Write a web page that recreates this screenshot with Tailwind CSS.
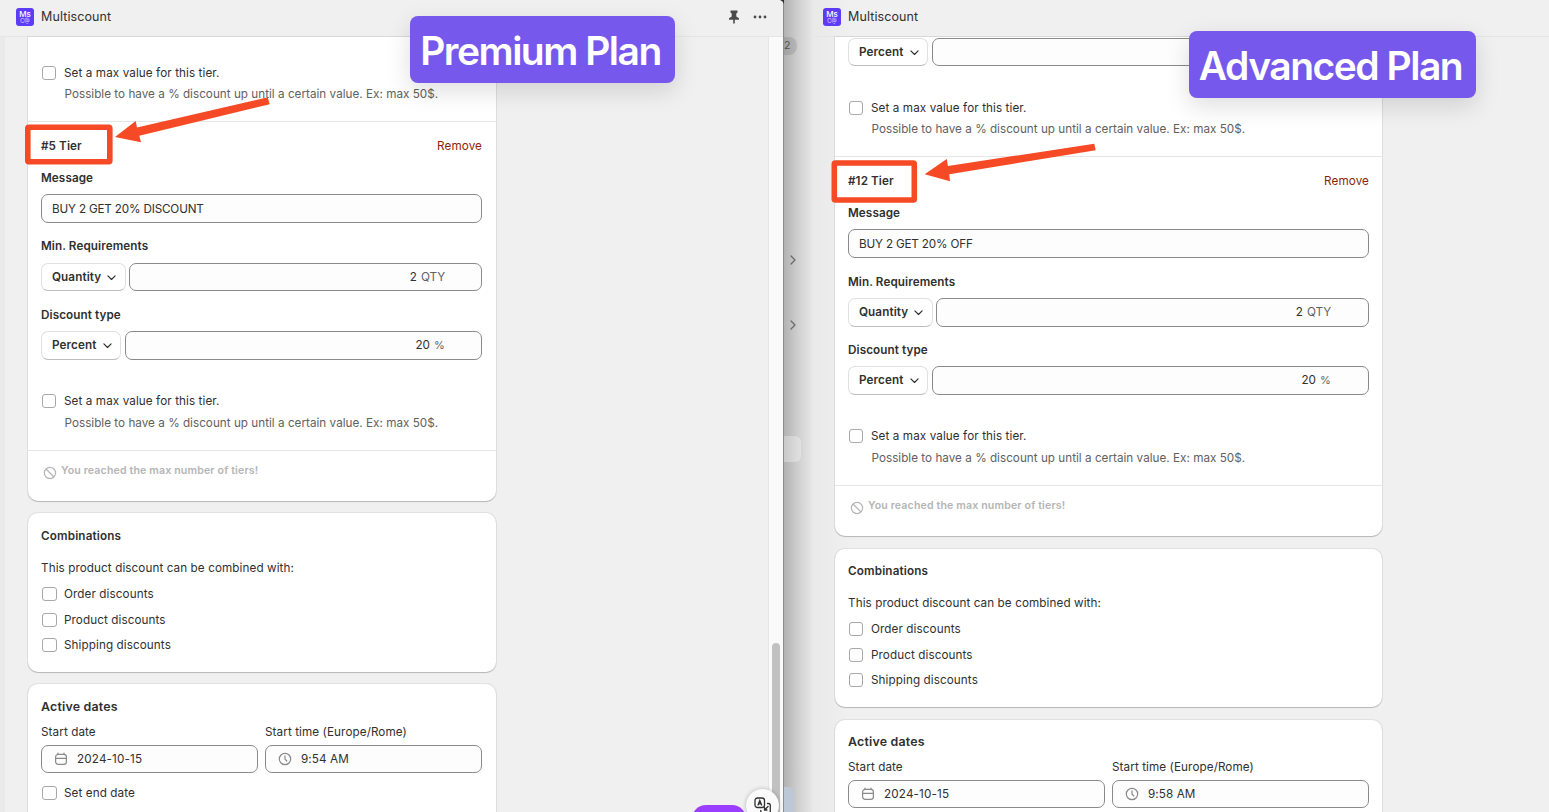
<!DOCTYPE html>
<html lang="en">

<head>
    <meta charset="UTF-8">
    <meta name="viewport" content="width=device-width, initial-scale=1.0">
    <title>Multiscount</title>
    <script src="https://cdn.jsdelivr.net/npm/@tailwindcss/browser@4"></script>
</head>

<body class="relative w-[1549px] h-[812px] overflow-hidden bg-[#f0f0f0] font-['Inter',sans-serif] text-[11.7px] leading-4 tracking-[0.09px] text-[#303030]">
    <!-- icons -->
    <svg class="hidden">
        <symbol id="chevron" viewBox="0 0 10 6" fill="none" stroke="currentColor" stroke-width="1.3" stroke-linecap="round" stroke-linejoin="round"><path d="M1 1l4 4 4-4" /></symbol>
        <symbol id="ban" viewBox="0 0 14 14" fill="none" stroke="currentColor" stroke-width="1.2"><circle cx="7" cy="7" r="5.6" /><path d="M3 3l8 8" /></symbol>
        <symbol id="calendar" viewBox="0 0 14 14" fill="none" stroke="currentColor" stroke-width="1.2" stroke-linecap="round"><rect x="1.6" y="2.3" width="10.8" height="10" rx="2.6" /><path d="M1.8 6.3h10.4M4 1v1.3M10 1v1.3" /></symbol>
        <symbol id="clock" viewBox="0 0 14 14" fill="none" stroke="currentColor" stroke-width="1.2" stroke-linecap="round" stroke-linejoin="round"><circle cx="7" cy="7" r="5.7" /><path d="M7 3.8v3.4l1.8 1.8" /></symbol>
    </svg>

    <div class="flex h-full">
        <!-- Premium window -->
        <section class="relative z-10 flex w-[784px] shrink-0 flex-col overflow-hidden border-r border-[#8c8c8c] bg-[#f0f0f0]">
            <header class="flex h-[37px] shrink-0 items-center border-b border-[#e6e6e6] pb-[3px] pl-4 pr-4">
                <div class="flex size-[18px] flex-col items-center rounded-[3px] bg-[#5c3bfb] pt-[2px] text-white">
                    <span class="text-[8px] font-medium leading-[8px] tracking-normal">Ms</span>
                    <span class="text-[5.5px] leading-[6px] tracking-normal text-white/80">C@</span>
                </div>
                <span class="ml-[7px] pt-px text-[12.5px] tracking-[0.1px]">Multiscount</span>
                <svg class="ml-auto h-[14px] w-[12px]" viewBox="0 0 12 14" fill="#4a4a4a"><path d="M2.5.5h7v2L8.3 3.6v2.8L11 8.3v1.5H6.8V13L6 14l-.8-1V9.8H1V8.3l2.700-1.900V3.6L2.5 2.5z" /></svg>
                <svg class="ml-[13px] h-[4px] w-[14px]" viewBox="0 0 14 4" fill="#4a4a4a"><circle cx="2" cy="2" r="1.4" /><circle cx="7" cy="2" r="1.4" /><circle cx="12" cy="2" r="1.4" /></svg>
            </header>
            <div class="flex min-h-0 flex-1">
                <div class="w-[5px] shrink-0 bg-[#eaeaea]"></div>
                <main class="ml-[23px] w-[468px] shrink-0">
                    <div class="h-[464px] rounded-b-[10px] bg-white shadow-[0_1px_1px_#00000030,0_0_0_1px_#0000000f]">
                        <div class="h-[84px] px-[13px] pt-[28px]">
                            <label class="flex items-center gap-2 pl-[1px]"><span class="size-[14px] rounded-[3px] border border-[#a8a8a8] bg-white"></span>Set a max value for this tier.</label>
                            <p class="mt-[5px] pl-[23.500px] tracking-[0.02px] text-[#616161]">Possible to have a % discount up until a certain value. Ex: max 50$.</p>
                        </div>
                        <div class="h-[329px] border-t border-[#e6e6e6] pl-[13px] pr-[14px]">
                            <div class="flex h-[48px] items-center justify-between"><h2 class="font-semibold">#5 Tier</h2><a class="text-[#8e1f0b]">Remove</a></div>
                            <h3 class="font-semibold">Message</h3>
                            <div class="mt-2 flex h-[29px] items-center rounded-[7px] border border-[#8a8a8a] bg-[#fdfdfd] px-[10px] tracking-[-0.17px]">BUY 2 GET 20% DISCOUNT</div>
                            <h3 class="mt-[15px] font-semibold">Min. Requirements</h3>
                            <div class="mt-[9px] flex h-[28px] gap-[3px]">
                                <button class="flex w-[85px] items-center justify-between rounded-[7px] border border-[#e0e0e0] border-b-[#bdbdbd] pl-[10px] pr-[9px] font-semibold">Quantity<svg class="mt-px h-[5.400px] w-[9px]"><use href="#chevron" /></svg></button>
                                <div class="flex flex-1 items-center justify-end gap-1 rounded-[7px] border border-[#8a8a8a] bg-[#fdfdfd] pr-[36px]">2 <span class="tracking-[-0.1px] text-[#616161]">QTY</span></div>
                            </div>
                            <h3 class="mt-4 font-semibold">Discount type</h3>
                            <div class="mt-2 flex h-[29px] gap-1">
                                <button class="flex w-[80px] items-center justify-between rounded-[7px] border border-[#e0e0e0] border-b-[#bdbdbd] pb-px pl-[10px] pr-[8px] font-semibold">Percent<svg class="mt-px h-[5.400px] w-[9px]"><use href="#chevron" /></svg></button>
                                <div class="flex flex-1 items-center justify-end gap-1 rounded-[7px] border border-[#8a8a8a] bg-[#fdfdfd] pb-px pr-[36px]">20 <span class="text-[11px] text-[#616161]">%</span></div>
                            </div>
                            <label class="mt-[33px] flex items-center gap-2 pl-px"><span class="size-[14px] rounded-[3px] border border-[#a8a8a8] bg-white"></span>Set a max value for this tier.</label>
                            <p class="mt-[6px] pl-[23.500px] tracking-[0.02px] text-[#616161]">Possible to have a % discount up until a certain value. Ex: max 50$.</p>
                        </div>
                        <div class="flex gap-1 border-t border-[#e6e6e6] pl-[15px] pt-[12px] text-[10.6px] font-semibold tracking-[0.15px] text-[#b5b5b5]"><svg class="mt-[3px] size-[14px]"><use href="#ban" /></svg>You reached the max number of tiers!</div>
                    </div>
                    <div class="mt-3 h-[159px] rounded-[10px] bg-white px-[13px] pt-[15px] shadow-[0_1px_1px_#00000030,0_0_0_1px_#0000000f]">
                        <h2 class="font-semibold tracking-[0.15px]">Combinations</h2>
                        <p class="mt-4">This product discount can be combined with:</p>
                        <div class="mt-[10px] flex flex-col gap-[9.500px] pl-[1px]">
                            <label class="flex items-center gap-[7px]"><span class="h-[14px] w-[15px] rounded-[3px] border border-[#a8a8a8]"></span>Order discounts</label>
                            <label class="flex items-center gap-[7px]"><span class="h-[14px] w-[15px] rounded-[3px] border border-[#a8a8a8]"></span>Product discounts</label>
                            <label class="flex items-center gap-[7px]"><span class="h-[14px] w-[15px] rounded-[3px] border border-[#a8a8a8]"></span>Shipping discounts</label>
                        </div>
                    </div>
                    <div class="mt-3 h-[159px] rounded-[10px] bg-white pl-[13px] pr-[14px] pt-[15px] shadow-[0_1px_1px_#00000030,0_0_0_1px_#0000000f]">
                        <h2 class="text-[12.4px] font-semibold tracking-[0.2px]">Active dates</h2>
                        <div class="mt-[9px] grid grid-cols-2 gap-[7px]">
                            <div>
                                <p>Start date</p>
                                <div class="mt-[5px] flex h-[28px] items-center gap-[9px] rounded-[7px] border border-[#8a8a8a] bg-[#fdfdfd] pl-3 tracking-[0.150px]"><svg class="size-[14px] text-[#8a8a8a]"><use href="#calendar" /></svg>2024-10-15</div>
                            </div>
                            <div>
                                <p>Start time (Europe/Rome)</p>
                                <div class="mt-[5px] flex h-[28px] items-center gap-[9px] rounded-[7px] border border-[#8a8a8a] bg-[#fdfdfd] pl-3"><svg class="size-[14px] text-[#8a8a8a]"><use href="#clock" /></svg>9:54 AM</div>
                            </div>
                        </div>
                        <label class="mt-3 flex items-center gap-[7px] pl-[1px]"><span class="h-[14px] w-[15px] rounded-[3px] border border-[#a8a8a8]"></span>Set end date</label>
                    </div>
                </main>
                <!-- scrollbar -->
                <div class="ml-auto w-[15px] border-l border-[#e6e6e6] bg-[#fafafa] pl-[3px] pt-[606px]">
                    <div class="h-[200px] w-2 rounded-full bg-[#c1c1c1]"></div>
                </div>
            </div>
            <div class="absolute left-[692px] top-[805px] h-[30px] w-[54px] rounded-[14px] bg-[#9b3dff]"></div>
            <div class="absolute left-[746px] top-[789px] flex size-[33px] justify-center rounded-full bg-[#fafafa] pt-2 shadow-[0_0_4px_#00000040]">
                <svg class="size-[17px]" viewBox="0 0 17 17" fill="none" stroke="#303030" stroke-width="1.3" stroke-linecap="round"><rect x="1" y="1" width="9.5" height="9.5" rx="2.5" /><path d="M4 8l1.8-4.500L7.600 8M4.600 6.800h2.300M13.500 6.500h.8a2 2 0 0 1 2 2v5.500a2 2 0 0 1-2 2H8.800a2 2 0 0 1-2-2v-.5M14 9.500l-3.500 3.500M10.500 10.500V13H13" /></svg>
            </div>
        </section>

        <!-- backdrop between the windows -->
        <div class="relative w-[28px] shrink-0 bg-linear-to-r from-[#b2b2b2] via-[#cfcfcf] to-[#e6e6e6] text-[#6b6b6b]">
            <span class="absolute left-0 top-[37px] w-[13px] rounded-r-lg bg-black/10 py-[1px] text-[10.500px] text-[#505050]">2</span>
            <svg class="absolute left-[4px] top-[255px] h-[10px] w-[10px] -rotate-90" viewBox="0 0 10 10"><use href="#chevron" y="2" width="10" height="6" /></svg>
            <svg class="absolute left-[4px] top-[320px] h-[10px] w-[10px] -rotate-90" viewBox="0 0 10 10"><use href="#chevron" y="2" width="10" height="6" /></svg>
            <span class="absolute left-0 top-[436px] h-[26px] w-[17px] rounded-r-md bg-white/30"></span>
            <span class="absolute left-0 top-[787px] h-[25px] w-[10px] rounded-tr-md bg-[#bdc8d6]"></span>
        </div>

        <!-- Advanced window -->
        <section class="flex flex-1 flex-col overflow-hidden bg-linear-to-r from-[#e9e9e9] to-[#f0f0f0] to-[40px]">
            <header class="flex h-[37px] shrink-0 items-center border-b border-[#e6e6e6] pb-[3px] pl-[11px]">
                <div class="flex size-[18px] flex-col items-center rounded-[3px] bg-[#5c3bfb] pt-[2px] text-white">
                    <span class="text-[8px] font-medium leading-[8px] tracking-normal">Ms</span>
                    <span class="text-[5.5px] leading-[6px] tracking-normal text-white/80">C@</span>
                </div>
                <span class="ml-[7px] pt-px text-[12.5px] tracking-[0.1px]">Multiscount</span>
            </header>
            <main class="ml-[23px] w-[547px]">
                <div class="h-[499px] rounded-b-[10px] bg-white shadow-[0_1px_1px_#00000030,0_0_0_1px_#0000000f]">
                    <div class="h-[119px] px-[13px] pt-px">
                        <div class="flex h-[28px] gap-1">
                            <button class="flex w-[80px] items-center justify-between rounded-[7px] border border-[#e0e0e0] border-b-[#bdbdbd] pl-[10px] pr-[8px] font-semibold">Percent<svg class="mt-px h-[5.400px] w-[9px]"><use href="#chevron" /></svg></button>
                            <div class="flex-1 rounded-[7px] border border-[#8a8a8a] bg-[#fdfdfd]"></div>
                        </div>
                        <label class="mt-[34px] flex items-center gap-2 pl-[1px]"><span class="size-[14px] rounded-[3px] border border-[#a8a8a8] bg-white"></span>Set a max value for this tier.</label>
                        <p class="mt-[5px] pl-[23.500px] tracking-[0.02px] text-[#616161]">Possible to have a % discount up until a certain value. Ex: max 50$.</p>
                    </div>
                    <div class="h-[329px] border-t border-[#e6e6e6] px-[13px]">
                        <div class="flex h-[48px] items-center justify-between"><h2 class="font-semibold">#12 Tier</h2><a class="text-[#8e1f0b]">Remove</a></div>
                        <h3 class="font-semibold">Message</h3>
                        <div class="mt-2 flex h-[29px] items-center rounded-[7px] border border-[#8a8a8a] bg-[#fdfdfd] px-[10px] tracking-[-0.17px]">BUY 2 GET 20% OFF</div>
                        <h3 class="mt-4 font-semibold">Min. Requirements</h3>
                        <div class="mt-2 flex h-[29px] gap-[3px]">
                            <button class="flex w-[85px] items-center justify-between rounded-[7px] border border-[#e0e0e0] border-b-[#bdbdbd] pb-px pl-[10px] pr-[9px] font-semibold">Quantity<svg class="mt-px h-[5.400px] w-[9px]"><use href="#chevron" /></svg></button>
                            <div class="flex flex-1 items-center justify-end gap-1 rounded-[7px] border border-[#8a8a8a] bg-[#fdfdfd] pb-px pr-[37px]">2 <span class="tracking-[-0.1px] text-[#616161]">QTY</span></div>
                        </div>
                        <h3 class="mt-[15px] font-semibold">Discount type</h3>
                        <div class="mt-2 flex h-[29px] gap-1">
                            <button class="flex w-[80px] items-center justify-between rounded-[7px] border border-[#e0e0e0] border-b-[#bdbdbd] pb-px pl-[10px] pr-[8px] font-semibold">Percent<svg class="mt-px h-[5.400px] w-[9px]"><use href="#chevron" /></svg></button>
                            <div class="flex flex-1 items-center justify-end gap-1 rounded-[7px] border border-[#8a8a8a] bg-[#fdfdfd] pb-px pr-[37px]">20 <span class="text-[11px] text-[#616161]">%</span></div>
                        </div>
                        <label class="mt-[33px] flex items-center gap-2 pl-px"><span class="size-[14px] rounded-[3px] border border-[#a8a8a8] bg-white"></span>Set a max value for this tier.</label>
                        <p class="mt-[6px] pl-[23.500px] tracking-[0.02px] text-[#616161]">Possible to have a % discount up until a certain value. Ex: max 50$.</p>
                    </div>
                    <div class="flex gap-1 border-t border-[#e6e6e6] pl-[15px] pt-[12px] text-[10.6px] font-semibold tracking-[0.15px] text-[#b5b5b5]"><svg class="mt-[3px] size-[14px]"><use href="#ban" /></svg>You reached the max number of tiers!</div>
                </div>
                <div class="mt-[13px] h-[158px] rounded-[10px] bg-white px-[13px] pt-[14px] shadow-[0_1px_1px_#00000030,0_0_0_1px_#0000000f]">
                    <h2 class="font-semibold tracking-[0.15px]">Combinations</h2>
                    <p class="mt-4">This product discount can be combined with:</p>
                    <div class="mt-[10px] flex flex-col gap-[9.500px] pl-[1px]">
                        <label class="flex items-center gap-2"><span class="size-[14px] rounded-[3px] border border-[#a8a8a8]"></span>Order discounts</label>
                        <label class="flex items-center gap-2"><span class="size-[14px] rounded-[3px] border border-[#a8a8a8]"></span>Product discounts</label>
                        <label class="flex items-center gap-2"><span class="size-[14px] rounded-[3px] border border-[#a8a8a8]"></span>Shipping discounts</label>
                    </div>
                </div>
                <div class="mt-[13px] h-[159px] rounded-[10px] bg-white px-[13px] pt-[14px] shadow-[0_1px_1px_#00000030,0_0_0_1px_#0000000f]">
                    <h2 class="text-[12.4px] font-semibold tracking-[0.2px]">Active dates</h2>
                    <div class="mt-[9px] grid grid-cols-2 gap-[7px]">
                        <div>
                            <p>Start date</p>
                            <div class="mt-[5px] flex h-[28px] items-center gap-[9px] rounded-[7px] border border-[#8a8a8a] bg-[#fdfdfd] pl-3 tracking-[0.150px]"><svg class="size-[14px] text-[#8a8a8a]"><use href="#calendar" /></svg>2024-10-15</div>
                        </div>
                        <div>
                            <p>Start time (Europe/Rome)</p>
                            <div class="mt-[5px] flex h-[28px] items-center gap-[9px] rounded-[7px] border border-[#8a8a8a] bg-[#fdfdfd] pl-3"><svg class="size-[14px] text-[#8a8a8a]"><use href="#clock" /></svg>9:58 AM</div>
                        </div>
                    </div>
                </div>
            </main>
        </section>
    </div>

    <!-- annotations -->
    <div class="absolute left-[410px] top-4 z-20 flex h-[67px] w-[265px] items-center justify-center whitespace-nowrap rounded-lg bg-[#7758ed] pr-1 pt-[3px] text-[39px] font-semibold tracking-[-1.5px] text-white shadow-[0_8px_24px_#00000022]">Premium Plan</div>
    <div class="absolute left-[1189px] top-[31px] z-20 flex h-[67px] w-[287px] items-center justify-center whitespace-nowrap rounded-lg bg-[#7758ed] pr-1 pt-[3px] text-[39px] font-semibold tracking-[-1.5px] text-white shadow-[0_8px_24px_#00000022]">Advanced Plan</div>
    <svg class="absolute inset-0 z-20 h-[812px] w-[1549px]" fill="none">
        <g stroke="#f54a25" stroke-width="5.6">
            <rect x="27.8" y="127.2" width="82" height="34.5" rx="1" />
            <rect x="834.3" y="163" width="80" height="37" rx="1" />
        </g>
        <g fill="#f54a25">
            <path d="M267.7 97.3L269.7 104.3 139.3 135.7 141 142.3 115 137 135.7 121 137 127.5z" />
            <path d="M1094.3 143.7L1095.7 150.3 949.3 174.3 950 181.3 924.7 174.3 946.7 159 948 166z" />
        </g>
        <path d="M780 0h4v4q-1-3-4-4z" fill="#303030" />
    </svg>
</body>

</html>
